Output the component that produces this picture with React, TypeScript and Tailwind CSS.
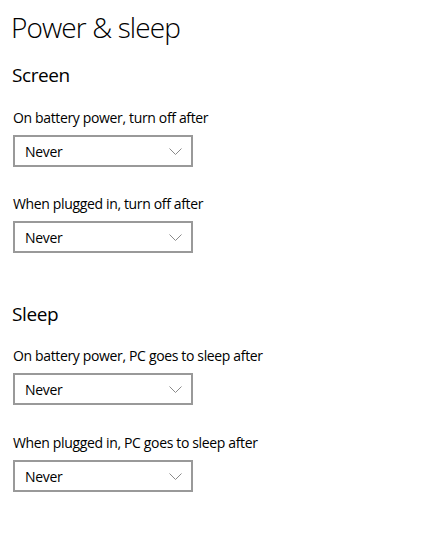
const font = { fontFamily: '"Open Sans", "Noto Sans", sans-serif' };

function Chevron() {
  return (
    <svg width="13" height="7" viewBox="0 0 13 7" className="shrink-0">
      <path d="M0.5 0.5 L6.5 6.5 L12.5 0.5" fill="none" stroke="#8a8a8a" strokeWidth="1" />
    </svg>
  );
}

function Dropdown({ value }: { value: string }) {
  return (
    <div className="flex items-center justify-between w-[180px] h-[32px] border-2 border-[#999999] bg-white pl-[10px] pr-[9px] text-[14px] tracking-[-0.3px] text-black">
      <span>{value}</span>
      <Chevron />
    </div>
  );
}

function Setting({ label, value }: { label: string; value: string }) {
  return (
    <div>
      <div className="text-[14px] leading-[20px] tracking-[-0.35px] text-black">{label}</div>
      <div className="mt-[7px]">
        <Dropdown value={value} />
      </div>
    </div>
  );
}

export default function App() {
  return (
    <div className="w-[437px] h-[560px] bg-white pl-[11px] pt-[9px]" style={font}>
      <h1 className="text-[28px] font-light leading-[36px] tracking-[-0.9px] text-black">Power &amp; sleep</h1>
      <div className="pl-[2px]">
        <h2 className="-ml-[1px] mt-[16px] text-[19px] leading-[28px] tracking-[-0.4px] text-black">Screen</h2>
        <div className="mt-[19px] flex flex-col gap-[27px]">
          <Setting label="On battery power, turn off after" value="Never" />
          <Setting label="When plugged in, turn off after" value="Never" />
        </div>
        <h2 className="-ml-[1px] mt-[47px] text-[19px] leading-[28px] tracking-[-0.4px] text-black">Sleep</h2>
        <div className="mt-[18px] flex flex-col gap-[28px]">
          <Setting label="On battery power, PC goes to sleep after" value="Never" />
          <Setting label="When plugged in, PC goes to sleep after" value="Never" />
        </div>
      </div>
    </div>
  );
}
